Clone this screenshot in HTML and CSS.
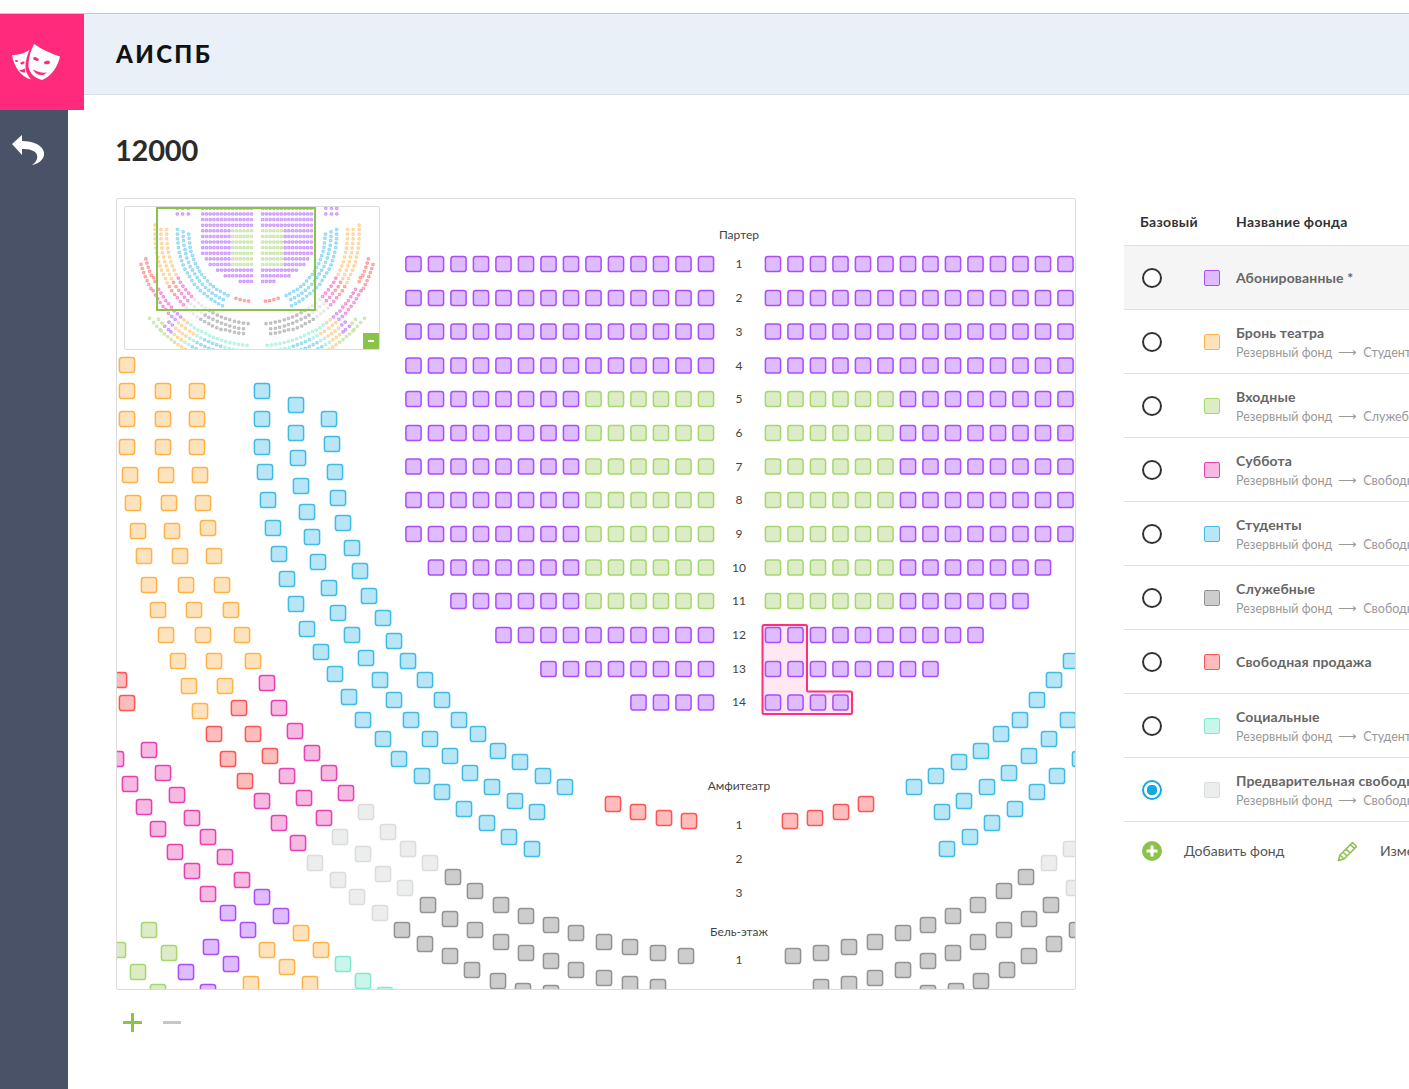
FILE: index.html
```html
<!DOCTYPE html>
<html lang="ru">
<head>
<meta charset="utf-8">
<title>АИСПБ</title>
<link rel="stylesheet" href="styles.css">
</head>
<body>
<div class="app">
  <header class="header">
    <div class="logo">
      <svg class="logo-icon" viewBox="0 0 84 96" width="84" height="96">
        <path class="mask" d="M12 41C18 41 25 39 29.5 36C27 41 26 46 25.5 51C25 56 27 61 31 65.5C21 63 14 53 12 41Z"/>
        <path class="mask" d="M34 30C41 35 52 40 60 42.5C58 52 52 62 42 66C34 64 28 58 28.5 50C29 42 31 36 34 30Z"/>
        <ellipse class="mask-cut" cx="36" cy="45" rx="3" ry="1.7" transform="rotate(20 36 45)"/>
        <ellipse class="mask-cut" cx="47" cy="48.5" rx="3" ry="1.7" transform="rotate(-12 47 48.5)"/>
        <path class="mask-cut" d="M33 55.5C37 58 42 59 46.5 58.5C44 62.5 36 62 33 55.5Z"/>
        <ellipse class="mask-cut" cx="22.5" cy="49" rx="2.3" ry="1.3" transform="rotate(-18 22.5 49)"/>
        <ellipse class="mask-cut" cx="16.5" cy="47" rx="1.6" ry="1" transform="rotate(10 16.5 47)"/>
        <path class="mask-cut" d="M19 56C21 56 23 55.5 25 54.5C25 56 25 57.500 25.500 58.500C22.500 58.500 20.500 58 19 56Z"/>
      </svg>
    </div>
    <div class="bar"><span class="brand">АИСПБ</span></div>
  </header>
  <div class="body">
    <aside class="side">
      <svg class="back" viewBox="12 135 32 30" width="32" height="30">
        <path d="M12 144L22 135V141C34 141 45 146 44 155C43.500 160 38 164 32 165C36 162 38 159 37 155C35.500 150 29 149 22 149V155Z"/>
      </svg>
    </aside>
    <main class="content">
      <h1 class="title">12000</h1>
      <div class="work">
        <section class="map-col">
          <div class="map">
            <svg id="hall" class="hall" viewBox="117 199 958 790" width="958" height="790">
              <path class="selection" d="M764 625H805.500Q807 625 807 626.500V690Q807 691.500 808.500 691.500H850.500Q852 691.500 852 693V712.500Q852 714 850.500 714H764Q762.500 714 762.500 712.500V626.500Q762.500 625 764 625Z"/>
              <g id="seats"></g>
              <g class="labels">
                <text x="739" y="239">Партер</text>
                <text x="739" y="268">1</text>
                <text x="739" y="302">2</text>
                <text x="739" y="335.500">3</text>
                <text x="739" y="369.500">4</text>
                <text x="739" y="403">5</text>
                <text x="739" y="437">6</text>
                <text x="739" y="470.500">7</text>
                <text x="739" y="504">8</text>
                <text x="739" y="538">9</text>
                <text x="739" y="571.500">10</text>
                <text x="739" y="605">11</text>
                <text x="739" y="639">12</text>
                <text x="739" y="673">13</text>
                <text x="739" y="706">14</text>
                <text x="739" y="790">Амфитеатр</text>
                <text x="739" y="829">1</text>
                <text x="739" y="863">2</text>
                <text x="739" y="897">3</text>
                <text x="739" y="936">Бель-этаж</text>
                <text x="739" y="964">1</text>
              </g>
            </svg>
            <div class="mini">
              <svg class="mini-svg" width="254" height="142" viewBox="0 0 254 142">
                <g id="mini-seats" transform="translate(8.800 -42.700) scale(0.16667)"></g>
              </svg>
              <div class="viewport"></div>
              <button class="mini-btn" type="button"><span class="mini-minus"></span></button>
            </div>
          </div>
          <div class="zoom">
            <svg width="19" height="19" viewBox="0 0 19 19"><path class="zoom-plus" d="M9.500 1V18M1 9.500H18"/></svg>
            <svg width="18" height="19" viewBox="0 0 18 19"><path class="zoom-minus" d="M1 9.500H17"/></svg>
          </div>
        </section>
        <section class="funds">
          <div class="funds-head"><span class="col-base">Базовый</span><span class="col-name">Название фонда</span></div>
          <div class="fund active">
            <span class="radio"></span><span class="swatch c-p"></span>
            <div class="fund-text"><div class="fund-name">Абонированные *</div></div>
          </div>
          <div class="fund">
            <span class="radio"></span><span class="swatch c-o"></span>
            <div class="fund-text two"><div class="fund-name">Бронь театра</div><div class="fund-sub">Резервный фонд<span class="arrow">⟶</span>Студенты</div></div>
          </div>
          <div class="fund">
            <span class="radio"></span><span class="swatch c-g"></span>
            <div class="fund-text two"><div class="fund-name">Входные</div><div class="fund-sub">Резервный фонд<span class="arrow">⟶</span>Служебные</div></div>
          </div>
          <div class="fund">
            <span class="radio"></span><span class="swatch c-k"></span>
            <div class="fund-text two"><div class="fund-name">Суббота</div><div class="fund-sub">Резервный фонд<span class="arrow">⟶</span>Свободная продажа</div></div>
          </div>
          <div class="fund">
            <span class="radio"></span><span class="swatch c-b"></span>
            <div class="fund-text two"><div class="fund-name">Студенты</div><div class="fund-sub">Резервный фонд<span class="arrow">⟶</span>Свободная продажа</div></div>
          </div>
          <div class="fund">
            <span class="radio"></span><span class="swatch c-s"></span>
            <div class="fund-text two"><div class="fund-name">Служебные</div><div class="fund-sub">Резервный фонд<span class="arrow">⟶</span>Свободная продажа</div></div>
          </div>
          <div class="fund">
            <span class="radio"></span><span class="swatch c-r"></span>
            <div class="fund-text"><div class="fund-name">Свободная продажа</div></div>
          </div>
          <div class="fund">
            <span class="radio"></span><span class="swatch c-t"></span>
            <div class="fund-text two"><div class="fund-name">Социальные</div><div class="fund-sub">Резервный фонд<span class="arrow">⟶</span>Студенты</div></div>
          </div>
          <div class="fund">
            <span class="radio on"></span><span class="swatch c-l"></span>
            <div class="fund-text two"><div class="fund-name">Предварительная свободная продажа</div><div class="fund-sub">Резервный фонд<span class="arrow">⟶</span>Свободная продажа</div></div>
          </div>
          <div class="funds-foot">
            <svg class="add-icon" width="20" height="20" viewBox="0 0 20 20"><circle cx="10" cy="10" r="10"/><path d="M10 4.500V15.500M4.500 10H15.500"/></svg>
            <span class="foot-label add-label">Добавить фонд</span>
            <svg class="pencil" width="22" height="22" viewBox="0 0 22 22"><path d="M1.500 20.500L3 15L15.500 2.500L19.500 6.500L7 19ZM3 15L7 19M13.500 4.500L17.500 8.500M6 12L10 16M9 9L13 13"/></svg>
            <span class="foot-label edit-label">Изменить</span>
          </div>
        </section>
      </div>
    </main>
  </div>
</div>
<script src="app.js"></script>
</body>
</html>
```
FILE: styles.css
```css
* { box-sizing: border-box; }
html, body { margin: 0; height: 100%; overflow: hidden; background: #fff; }
body { font-family: "Lato", "Open Sans", "Liberation Sans", sans-serif; color: #333; width: 1409px; height: 1089px; }
.app { display: flex; flex-direction: column; height: 100%; padding-top: 13px; }
.header { display: flex; align-items: flex-start; height: 97px; border-top: 1px solid #c9c9c9; flex: none; }
.logo { width: 84px; height: 96px; background: #ff2a7b; flex: none; }
.logo-icon { display: block; }
.mask { fill: #fff; }
.mask-cut { fill: #ff2a7b; }
.bar { flex: 1; height: 81px; background: #e9f0f7; border-bottom: 1px solid #d9dee3; display: flex; align-items: center; padding-left: 32px; }
.brand { font-size: 24px; font-weight: 900; letter-spacing: 2.4px; color: #111; margin-top: -2px; }
.body { display: flex; flex: 1; min-height: 0; }
.side { width: 68px; background: #4a5267; flex: none; padding: 25px 0 0 12px; }
.back { display: block; fill: #fff; }
.content { flex: 1; padding: 22px 0 0 48px; min-width: 0; }
.title { margin: 0 0 0 -1px; font-size: 29px; line-height: 36px; font-weight: 700; letter-spacing: -0.2px; color: #2b2b2b; }
.work { display: flex; margin-top: 30px; align-items: flex-start; }
.map-col { width: 960px; flex: none; }
.map { position: relative; width: 960px; height: 792px; border: 1px solid #dcdcdc; border-radius: 2px; overflow: hidden; }
.hall { display: block; }
.selection { fill: #ffe8f1; stroke: #ff2f7e; stroke-width: 2; }
.labels text { font-size: 12px; fill: #444; text-anchor: middle; }
.mini { position: absolute; left: 7px; top: 7px; width: 256px; height: 144px; background: #fff; border: 1px solid #dcdcdc; border-radius: 2px; overflow: hidden; }
.mini-svg { display: block; }
.mini .seat { stroke-width: 2.600; }
.viewport { position: absolute; left: 31px; top: 0; width: 160px; height: 104px; border: 2px solid #8bc34a; }
.mini-btn { position: absolute; right: 0; bottom: 0; width: 16px; height: 16px; border: 0; padding: 0; background: #8bc34a; display: flex; align-items: center; justify-content: center; }
.mini-minus { display: block; width: 6px; height: 2px; background: #fff; }
.zoom { display: flex; gap: 21px; align-items: center; margin: 23px 0 0 7px; }
.zoom svg { display: block; }
.zoom-plus { stroke: #8bc34a; stroke-width: 3; stroke-linecap: round; fill: none; }
.zoom-minus { stroke: #c4c7cb; stroke-width: 3; stroke-linecap: round; fill: none; }
.funds { margin-left: 48px; width: 420px; flex: none; }
.funds-head { height: 48px; display: flex; align-items: center; padding: 0 0 0 16px; border-bottom: 1px solid #e0e0e0; font-size: 14px; font-weight: 700; color: #333; letter-spacing: 0.3px; }
.col-base { width: 96px; }
.fund { height: 64px; display: flex; align-items: center; padding-left: 18px; border-bottom: 1px solid #e0e0e0; }
.fund.active { background: #f5f5f5; }
.radio { width: 20px; height: 20px; border: 2px solid #333; border-radius: 50%; flex: none; background: #fff; }
.radio.on { border-color: #14a9e0; background: radial-gradient(circle, #14a9e0 0 5px, #fff 5.5px); }
.swatch { width: 16px; height: 16px; margin-left: 42px; border-radius: 2px; border: 1.300px solid; flex: none; }
.c-p { background: #dfbcff; border-color: #a94dff; }
.c-o { background: #fde3bd; border-color: #ffb347; }
.c-g { background: #dcecc6; border-color: #a5d86c; }
.c-k { background: #f5b9e2; border-color: #ea3fb2; }
.c-b { background: #b8e6f7; border-color: #3dbce8; }
.c-s { background: #cdcdcd; border-color: #939393; }
.c-r { background: #ffbcbc; border-color: #ff5454; }
.c-t { background: #c9f6ea; border-color: #80e9d0; }
.c-l { background: #eceeee; border-color: #dcdcdc; }
.fund-text { margin-left: 16px; white-space: nowrap; }
.fund-text.two { padding-top: 3px; }
.fund-name { font-size: 14px; line-height: 18px; font-weight: 700; color: #666; letter-spacing: 0.15px; }
.fund-sub { font-size: 12.500px; line-height: 18px; color: #999; margin-top: 2px; }
.arrow { margin: 0 6px; color: #999; }
.funds-foot { height: 58px; display: flex; align-items: center; padding-left: 18px; font-size: 14px; color: #555; white-space: nowrap; }
.add-icon { flex: none; }
.add-icon circle { fill: #8bc34a; }
.add-icon path { stroke: #fff; stroke-width: 3; fill: none; }
.foot-label { margin: -2px 0 0 10px; }
.add-label { margin-left: 22px; width: 154px; }
.edit-label { margin-left: 21px; }
.pencil { flex: none; margin-left: -1px; }
.pencil path { fill: none; stroke: #8bc34a; stroke-width: 1.600; stroke-linejoin: round; }
.seat { stroke-width: 1.500; }
.p { fill: #dfbcff; stroke: #a94dff; }
.o { fill: #fde3bd; stroke: #ffb347; }
.g { fill: #dcecc6; stroke: #a5d86c; }
.k { fill: #f5b9e2; stroke: #ea3fb2; }
.b { fill: #b8e6f7; stroke: #3dbce8; }
.s { fill: #cdcdcd; stroke: #939393; }
.r { fill: #ffbcbc; stroke: #ff5454; }
.t { fill: #c9f6ea; stroke: #80e9d0; }
.l { fill: #eceeee; stroke: #dcdcdc; }
```
FILE: app.js
```js
(function () {
  var NS = 'http://www.w3.org/2000/svg';
  var CX = 739.5, CY = 401;
  var rowsY = [264, 298, 331.5, 365.5, 399, 433, 466.5, 500, 534, 567.5, 601, 635, 669, 702.5];
  var leftStart = [0, 0, 0, 0, 0, 0, 0, 0, 0, 1, 2, 4, 6, 10];
  var rightEnd = [13, 13, 13, 13, 13, 13, 13, 13, 13, 12, 11, 9, 7, 3];

  var seats = [];
  function add(c, x, y) { seats.push([c, x, y]); }

  rowsY.forEach(function (y, r) {
    var greenRow = r >= 4 && r <= 10;
    for (var i = leftStart[r]; i <= 13; i++) add(greenRow && i >= 8 ? 'g' : 'p', 413.5 + 22.5 * i, y);
    for (var j = 0; j <= rightEnd[r]; j++) add(greenRow && j <= 5 ? 'g' : 'p', 773 + 22.5 * j, y);
  });

  var mirrored = {
    o: [[127,365],[127,391],[127,419],[127,447],[130,475],[133,503],[138,531],[144,556],[149,585],[158,610],[166,635],[178,661],[189,686],[200,711],
        [163,391],[163,419],[163,447],[166,475],[169,503],[172,531],[180,556],[186,585],[194,610],[203,635],[214,661],[225,686],
        [197,391],[197,419],[197,447],[200,475],[203,503],[208,528],[214,556],[222,585],[231,610],[242,635],[253,661],
        [301,933],[321,950],[267,950],[287,967],[251,984],[310,984]],
    r: [[119,680],[127,703],[239,708],[214,734],[253,734],[228,759],[270,756],[245,781],[613,804],[638,812],[664,818],[689,821]],
    k: [[267,683],[279,708],[295,731],[312,753],[329,773],[346,793],[287,776],[304,798],[324,818],[262,801],[279,823],[298,843],
        [149,750],[163,773],[177,795],[192,818],[208,837],[225,857],[242,880],
        [116,759],[130,784],[144,807],[158,829],[175,852],[192,871],[208,894]],
    p: [[262,897],[281,916],[228,913],[248,930],[211,947],[231,964],[186,972],[208,992]],
    t: [[343,964],[363,981],[385,995]],
    g: [[149,930],[169,953],[118,950],[138,972],[158,992]],
    l: [[366,812],[340,837],[315,863],[388,832],[363,854],[338,880],[408,849],[383,874],[357,897],[430,863],[405,888],[380,913]],
    s: [[402,930],[453,877],[475,891],[428,905],[450,919],[425,944],[450,956],[472,970],[498,981],[523,991],[551,993],
        [475,930],[501,942],[526,953],[551,961],[576,970],[604,978],[630,984],[658,987],
        [501,905],[526,916],[551,925],[576,933],[604,942],[630,947],[658,953],[686,956]],
    b: [[262,391],[262,419],[262,447],[265,472],[268,500],[273,528],[279,554],[287,579],[296,604],[307,629],[321,652],[335,674],[349,697],[363,720],[383,739],[399,759],[422,776],[442,792],[464,809],[487,823],[509,837],[532,849],
        [296,405],[296,433],[298,458],[301,486],[307,512],[312,537],[318,562],[329,588],[338,613],[352,635],[366,658],[380,680],[394,700],[411,720],[430,739],[450,756],[470,773],[492,787],[515,801],[537,812],
        [329,419],[332,444],[335,472],[338,498],[343,523],[352,548],[360,571],[369,596],[383,618],[394,641],[408,661],[425,680],[442,700],[459,720],[478,734],[498,751],[520,762],[543,776],[565,787]]
  };
  Object.keys(mirrored).forEach(function (c) {
    mirrored[c].forEach(function (p) {
      add(c, p[0], p[1]);
      add(c, 2 * CX - p[0], p[1]);
    });
  });

  /* Seats that only the overview shows: the parts of the balcony outside the main view. */
  var extra = [];
  function both(c, x, y) { extra.push([c, x, y]); extra.push([c, 2 * CX - x, y]); }
  function arc(R, from, to, colour) {
    var step = (26 / R) * 180 / Math.PI;
    for (var t = from; t >= to; t -= step) {
      var rad = t * Math.PI / 180;
      var x = CX - R * Math.sin(rad), y = CY + R * Math.cos(rad);
      if (y > 996 || x < 110) both(colour(t), x, y);
    }
  }
  arc(688, 76, 62, function () { return 'r'; });
  arc(724, 74, 61, function () { return 'r'; });
  arc(688, 31, 5, function () { return 't'; });
  arc(724, 36, 5, function (t) { return t > 30 ? 'o' : t > 26 ? 't' : t > 17 ? 'b' : 't'; });
  arc(760, 40, 12, function (t) { return t > 33 ? 'o' : t > 29 ? 't' : t > 18 ? 'b' : t > 16 ? 'g' : 't'; });
  arc(795, 48, 25, function (t) { return t > 44 ? 'g' : t > 40 ? 'p' : t > 34 ? 'o' : t > 30 ? 't' : 'b'; });
  arc(830, 51, 30, function (t) { return t > 36 ? 'g' : 'o'; });
  [[576,1000],[604,1008],[630,1013],[658,1016]].forEach(function (p) { both('s', p[0], p[1]); });
  [[261,264],[293,264],[327,264],[261,298],[293,298],[327,298]].forEach(function (p) { both('p', p[0], p[1]); });

  function draw(g, list) {
    var frag = document.createDocumentFragment();
    list.forEach(function (s) {
      var r = document.createElementNS(NS, 'rect');
      r.setAttribute('class', 'seat ' + s[0]);
      r.setAttribute('x', s[1] - 7.6);
      r.setAttribute('y', s[2] - 7.6);
      r.setAttribute('width', 15.2);
      r.setAttribute('height', 15.2);
      r.setAttribute('rx', 2.6);
      frag.appendChild(r);
    });
    g.appendChild(frag);
  }
  draw(document.getElementById('seats'), seats);
  draw(document.getElementById('mini-seats'), seats.concat(extra));
})();
```
